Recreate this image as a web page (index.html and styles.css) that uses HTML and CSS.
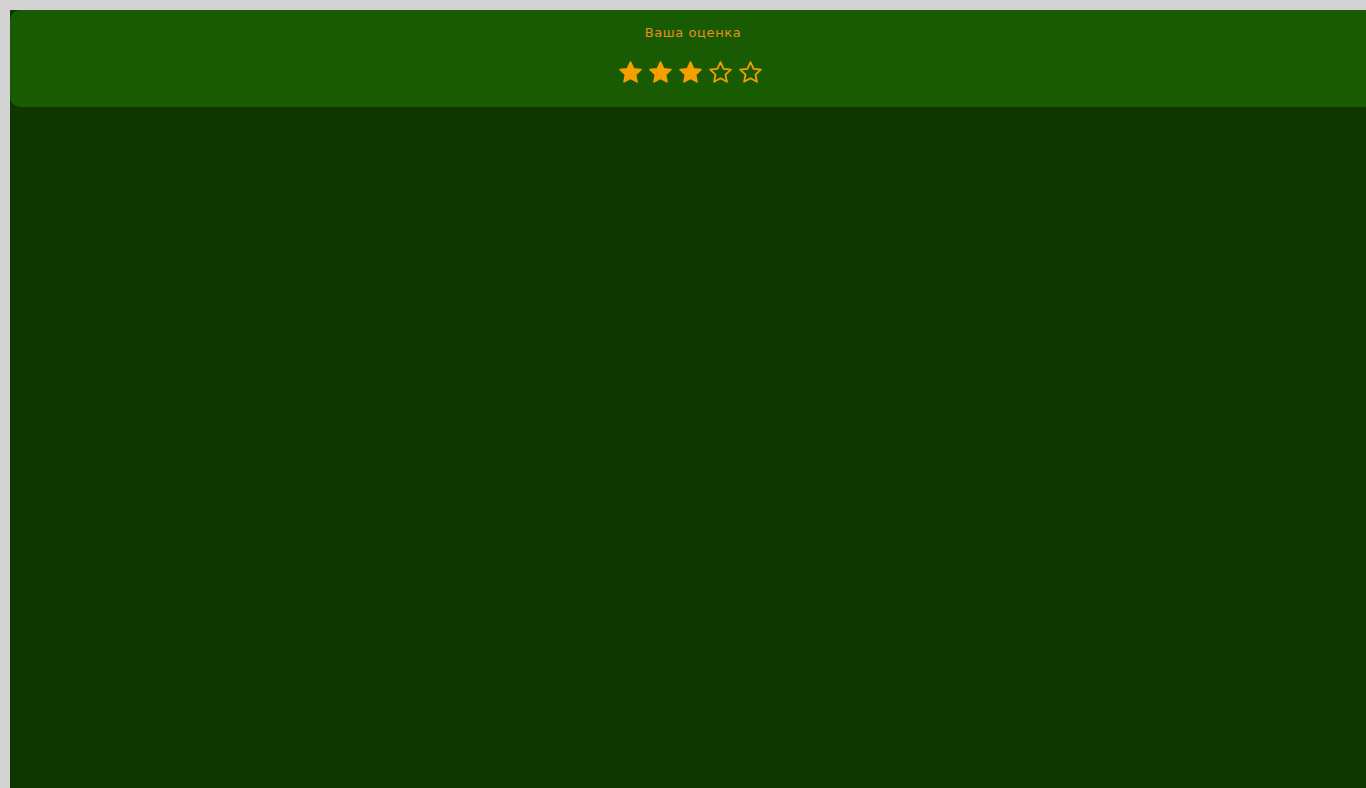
FILE: index.html
```html
<!DOCTYPE html>
<html lang="ru">
<head>
<meta charset="utf-8">
<title>Ваша оценка</title>
<link rel="stylesheet" href="styles.css">
</head>
<body>
<div class="app">
  <div class="rating-panel">
    <div class="rating-title">Ваша оценка</div>
    <div class="stars">
      <svg class="star" viewBox="0 0 24 24"><path class="fill" d="M12 2.8l2.75 5.9 6.45.75-4.75 4.45 1.25 6.4L12 17.1l-5.7 3.2 1.25-6.4L2.8 9.45l6.45-.75z"/></svg>
      <svg class="star" viewBox="0 0 24 24"><path class="fill" d="M12 2.8l2.75 5.9 6.45.75-4.75 4.45 1.25 6.4L12 17.1l-5.7 3.2 1.25-6.4L2.8 9.45l6.45-.75z"/></svg>
      <svg class="star" viewBox="0 0 24 24"><path class="fill" d="M12 2.8l2.75 5.9 6.45.75-4.75 4.45 1.25 6.4L12 17.1l-5.7 3.2 1.25-6.4L2.8 9.45l6.45-.75z"/></svg>
      <svg class="star" viewBox="0 0 24 24"><path class="outline" d="M12 2.8l2.75 5.9 6.45.75-4.75 4.45 1.25 6.4L12 17.1l-5.7 3.2 1.25-6.4L2.8 9.45l6.45-.75z"/></svg>
      <svg class="star" viewBox="0 0 24 24"><path class="outline" d="M12 2.8l2.75 5.9 6.45.75-4.75 4.45 1.25 6.4L12 17.1l-5.7 3.2 1.25-6.4L2.8 9.45l6.45-.75z"/></svg>
    </div>
  </div>
</div>
</body>
</html>
```
FILE: styles.css
```css
html {
  background: #d3d3d3;
  overflow: hidden;
}
body {
  margin: 10px 0 0 10px;
  background: #d3d3d3;
}
.app {
  width: 1366px;
  height: 778px;
  background: #0e3700;
}
.rating-panel {
  height: 97px;
  background: #195b03;
  border-radius: 10px;
  display: flex;
  flex-direction: column;
  align-items: center;
  box-sizing: border-box;
  padding-top: 15px;
}
.rating-title {
  font-family: "DejaVu Sans", sans-serif;
  font-size: 13px;
  line-height: 16px;
  letter-spacing: 0.6px;
  color: #e98e1c;
}
.stars {
  display: flex;
  gap: 3px;
  margin-top: 18px;
  margin-right: 6px;
}
.star {
  width: 27px;
  height: 27px;
  display: block;
}
.star .fill {
  fill: #f59f00;
  stroke: #f59f00;
  stroke-width: 1.6;
  stroke-linejoin: round;
}
.star .outline {
  fill: none;
  stroke: #f59f00;
  stroke-width: 1.6;
  stroke-linejoin: round;
}
```
